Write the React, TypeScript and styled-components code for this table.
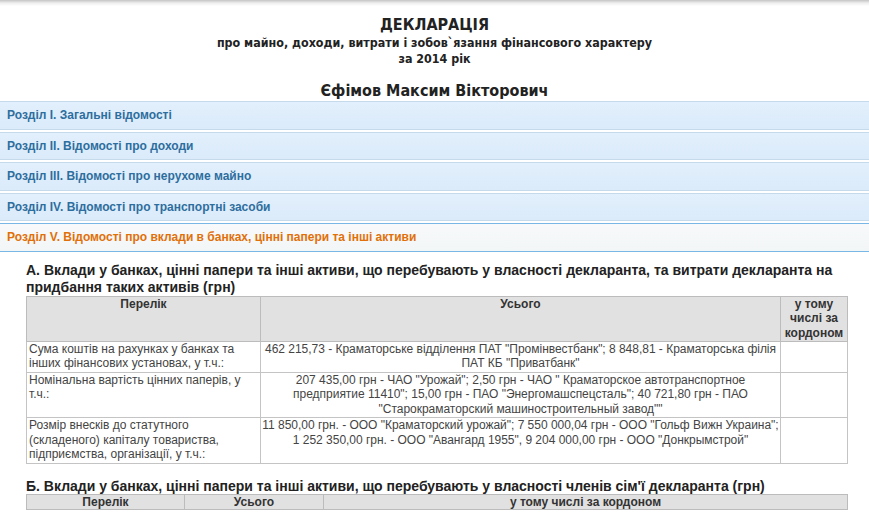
import React from "react";
import styled, { createGlobalStyle } from "styled-components";

const Global = createGlobalStyle`
  html, body { margin: 0; padding: 0; background: #fff; }
  body { font-family: "Liberation Sans", Arial, sans-serif; color: #333; }
`;

const Page = styled.div`
  width: 869px;
  height: 521px;
  overflow: hidden;
  display: flex;
  flex-direction: column;
`;

const TopShade = styled.div`
  height: 6px;
  flex-shrink: 0;
  background: linear-gradient(#c4c4c4, #eeeeee 50%, #ffffff);
`;

const Head = styled.header`
  display: flex;
  flex-direction: column;
  align-items: center;
  font-family: "DejaVu Sans Condensed", "Liberation Sans", sans-serif;
  font-weight: bold;
  color: #222;
  padding-top: 9px;
`;

const Title = styled.div`
  font-size: 16px;
  line-height: 20px;
`;

const Sub = styled.div`
  font-size: 12.4px;
  line-height: 16px;
`;

const Name = styled.div`
  font-size: 16px;
  line-height: 20px;
  margin-top: 14px;
`;

const Accordion = styled.div`
  display: flex;
  flex-direction: column;
  gap: 2px;
`;

const Section = styled.div<{ $active?: boolean }>`
  height: 28.5px;
  box-sizing: border-box;
  display: flex;
  align-items: center;
  padding-left: 7px;
  font-size: 12px;
  font-weight: bold;
  border: 1px solid ${(p) => (p.$active ? "#79b7e7" : "#c5dbec")};
  border-left: none;
  border-right: none;
  background: ${(p) =>
    p.$active
      ? "linear-gradient(#f7f9fa, #f3f6f7)"
      : "linear-gradient(#e2effc, #dbebfa)"};
  color: ${(p) => (p.$active ? "#e17009" : "#2e6e9e")};
`;

const Content = styled.div`
  padding: 10px 22px 0 26px;
`;

const H3 = styled.h3`
  margin: 0;
  font-size: 14px;
  line-height: 17px;
  font-weight: bold;
  color: #222;
`;

const Table = styled.table`
  border-collapse: collapse;
  width: 821px;
  table-layout: fixed;
  font-size: 12px;
  line-height: 14.5px;
  color: #444;
`;

const Th = styled.th<{ $w: number }>`
  width: ${(p) => p.$w - 5}px;
  background: #e1e1e1;
  border: 1px solid #bcbcbc;
  font-weight: bold;
  color: #333;
  vertical-align: top;
  text-align: center;
  line-height: 14.67px;
  padding: 0 2px;
`;

const Td = styled.td<{ $center?: boolean }>`
  border: 1px solid #c4c4c4;
  vertical-align: top;
  text-align: ${(p) => (p.$center ? "center" : "left")};
  padding: 0 ${(p) => (p.$center ? "0" : "2px")} 1px;
  letter-spacing: ${(p) => (p.$center ? "-0.02px" : "0")};
`;

const BHead = styled(H3)`
  margin-top: 14px;
  line-height: 16px;
`;

const rows = [
  {
    name: "Сума коштів на рахунках у банках та інших фінансових установах, у т.ч.:",
    total:
      '462 215,73 - Краматорське відділення ПАТ "Промінвестбанк"; 8 848,81 - Краматорська філія ПАТ КБ "Приватбанк"',
  },
  {
    name: "Номінальна вартість цінних паперів, у т.ч.:",
    total:
      '207 435,00 грн - ЧАО "Урожай"; 2,50 грн - ЧАО " Краматорское автотранспортное предприятие 11410"; 15,00 грн - ПАО "Энергомашспецсталь"; 40 721,80 грн - ПАО "Старокраматорский машиностроительный завод""',
  },
  {
    name: "Розмір внесків до статутного (складеного) капіталу товариства, підприємства, організації, у т.ч.:",
    total:
      '11 850,00 грн. - ООО "Краматорский урожай"; 7 550 000,04 грн - ООО "Гольф Вижн Украина"; 1 252 350,00 грн. - ООО "Авангард 1955", 9 204 000,00 грн - ООО "Донкрымстрой"',
  },
];

export default function App() {
  return (
    <Page>
      <Global />
      <TopShade />
      <Head>
        <Title>ДЕКЛАРАЦІЯ</Title>
        <Sub>про майно, доходи, витрати і зобов`язання фінансового характеру</Sub>
        <Sub>за 2014 рік</Sub>
        <Name>Єфімов Максим Вікторович</Name>
      </Head>
      <Accordion>
        <Section>Розділ І. Загальні відомості</Section>
        <Section>Розділ ІІ. Відомості про доходи</Section>
        <Section>Розділ ІІІ. Відомості про нерухоме майно</Section>
        <Section>Розділ ІV. Відомості про транспортні засоби</Section>
        <Section $active>Розділ V. Відомості про вклади в банках, цінні папери та інші активи</Section>
      </Accordion>
      <Content>
        <H3>
          А. Вклади у банках, цінні папери та інші активи, що перебувають у власності декларанта, та витрати декларанта на
          придбання таких активів (грн)
        </H3>
        <Table>
          <thead>
            <tr>
              <Th $w={234}>Перелік</Th>
              <Th $w={520}>Усього</Th>
              <Th $w={67}>у тому числі за кордоном</Th>
            </tr>
          </thead>
          <tbody>
            {rows.map((r) => (
              <tr key={r.name}>
                <Td>{r.name}</Td>
                <Td $center>{r.total}</Td>
                <Td />
              </tr>
            ))}
          </tbody>
        </Table>
        <BHead>Б. Вклади у банках, цінні папери та інші активи, що перебувають у власності членів сім'ї декларанта (грн)</BHead>
        <Table>
          <thead>
            <tr>
              <Th $w={158}>Перелік</Th>
              <Th $w={139}>Усього</Th>
              <Th $w={524}>у тому числі за кордоном</Th>
            </tr>
          </thead>
        </Table>
      </Content>
    </Page>
  );
}
